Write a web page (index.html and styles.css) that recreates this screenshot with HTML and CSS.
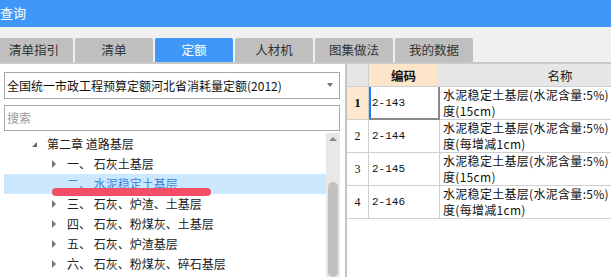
FILE: index.html
```html
<!DOCTYPE html>
<html lang="zh">
<head>
<meta charset="utf-8">
<title>查询</title>
<link rel="stylesheet" href="styles.css">
</head>
<body>
<div class="title">查询</div>
<div class="tabs">
  <div class="tab">清单指引</div>
  <div class="tab">清单</div>
  <div class="tab active">定额</div>
  <div class="tab">人材机</div>
  <div class="tab">图集做法</div>
  <div class="tab">我的数据</div>
</div>
<div class="main">
  <div class="left">
    <div class="select"><span class="select-text">全国统一市政工程预算定额河北省消耗量定额(2012)</span><i class="caret"></i></div>
    <div class="search"><span class="placeholder">搜索</span></div>
    <div class="tree">
      <ul class="rows">
        <li class="row l1"><i class="exp open"></i><span>第二章 道路基层</span></li>
        <li class="row l2"><i class="exp"></i><span>一、 石灰土基层</span></li>
        <li class="row l2 selected"><i class="exp none"></i><span>二、 水泥稳定土基层</span></li>
        <li class="row l2"><i class="exp"></i><span>三、 石灰、炉渣、土基层</span></li>
        <li class="row l2"><i class="exp"></i><span>四、 石灰、粉煤灰、土基层</span></li>
        <li class="row l2"><i class="exp"></i><span>五、 石灰、炉渣基层</span></li>
        <li class="row l2"><i class="exp"></i><span>六、 石灰、粉煤灰、碎石基层</span></li>
      </ul>
      <div class="scrollbar"><i class="up"></i><span class="thumb"></span></div>
    </div>
  </div>
  <div class="right">
    <div class="grid">
      <div class="hd corner"></div>
      <div class="hd code-hd">编码</div>
      <div class="hd name-hd">名称</div>

      <div class="rn cur">1</div>
      <div class="code cur-cell">2-143</div>
      <div class="name"><span class="line">水泥稳定土基层(水泥含量:5%) 厚</span><span class="line">度(15cm)</span></div>

      <div class="rn">2</div>
      <div class="code">2-144</div>
      <div class="name"><span class="line">水泥稳定土基层(水泥含量:5%) 厚</span><span class="line">度(每增减1cm)</span></div>

      <div class="rn">3</div>
      <div class="code">2-145</div>
      <div class="name"><span class="line">水泥稳定土基层(水泥含量:5%) 厚</span><span class="line">度(15cm)</span></div>

      <div class="rn">4</div>
      <div class="code">2-146</div>
      <div class="name"><span class="line">水泥稳定土基层(水泥含量:5%) 厚</span><span class="line">度(每增减1cm)</span></div>
    </div>
  </div>
</div>
<div class="mark"></div>
</body>
</html>
```

FILE: styles.css
```css
* { box-sizing: border-box; }
html, body {
  margin: 0;
  padding: 0;
}
body {
  width: 611px;
  height: 277px;
  overflow: hidden;
  position: relative;
  background: #f0f0f0;
  font-family: "Noto Sans CJK SC", "Noto Sans", sans-serif;
  font-size: 12px;
  color: #222;
}

.title {
  height: 27px;
  line-height: 26px;
  background: #3f98f7;
  color: #fff;
  font-size: 13px;
  padding-left: 0;
}

.tabs {
  height: 37px;
  padding-top: 11px;
  display: flex;
  gap: 2px;
  margin-left: -5px;
  border-bottom: 2px solid #c9c9c9;
  background: #f0f0f0;
}
.tab {
  width: 78px;
  height: 24px;
  line-height: 24px;
  text-align: center;
  background: #bfbfbf;
  color: #333;
  font-size: 12.5px;
  border-radius: 2px 2px 0 0;
}
.tab.active {
  background: #3f98f7;
  color: #fff;
}

.main {
  display: flex;
  height: 213px;
  overflow: hidden;
}

.left {
  width: 347px;
  flex: none;
  background: #fff;
  border-right: 2px solid #c4c4c4;
  padding: 8px 5px 0 4px;
  display: flex;
  flex-direction: column;
}

.select {
  height: 27px;
  border: 1px solid #a9a9a9;
  display: flex;
  align-items: center;
  padding: 0 6px 0 2px;
  color: #111;
}
.select-text {
  flex: 1;
  line-height: 25px;
}
.caret {
  width: 0;
  height: 0;
  border-left: 3.5px solid transparent;
  border-right: 3.5px solid transparent;
  border-top: 4px solid #777;
  margin-bottom: 2px;
}

.search {
  margin-top: 6px;
  height: 26px;
  border: 1px solid #a9a9a9;
  padding-left: 2px;
  line-height: 24px;
}
.placeholder { color: #9a9a9a; }

.tree {
  flex: 1;
  display: flex;
  margin-top: 2px;
  min-height: 0;
}
.rows {
  list-style: none;
  margin: 0;
  padding: 1px 0 0 0;
  flex: 1;
}
.row {
  height: 20px;
  line-height: 20px;
  display: flex;
  align-items: center;
  color: #222;
  white-space: pre;
}
.row.l1 { padding-left: 28px; }
.row.l2 { padding-left: 48px; }
.exp {
  width: 15px;
  height: 20px;
  flex: none;
  position: relative;
}
.exp::before {
  content: "";
  position: absolute;
  left: 0;
  top: 6px;
  border-left: 4px solid #777;
  border-top: 4px solid transparent;
  border-bottom: 4px solid transparent;
}
.exp.open::before {
  top: 8px;
  border-left: 5px solid transparent;
  border-top: 0;
  border-bottom: 5px solid #666;
}
.exp.none::before { display: none; }
.row.selected {
  background: #cce8ff;
  color: #3a86e0;
}

.scrollbar {
  width: 14px;
  flex: none;
  background: #e8e8e8;
  position: relative;
  display: flex;
  flex-direction: column;
  align-items: center;
}
.up {
  margin-top: 4px;
  width: 0;
  height: 0;
  border-left: 4px solid transparent;
  border-right: 4px solid transparent;
  border-bottom: 4px solid #8a8a8a;
}
.thumb {
  margin-top: 41px;
  width: 10px;
  height: 120px;
  background: #c1c1c1;
  border-radius: 5px;
}

.right {
  flex: 1;
  background: #fff;
  overflow: hidden;
  min-width: 0;
}
.grid {
  display: grid;
  grid-template-columns: 22px 71px 241px;
  grid-template-rows: 23px repeat(4, 33px);
  width: 334px;
  font-family: "Noto Sans CJK SC", sans-serif;
  font-size: 12px;
  color: #111;
}
.hd {
  border-right: 1px solid #cfcfcf;
  border-bottom: 1px solid #cfcfcf;
  background: #e6e6e6;
  display: flex;
  align-items: center;
  justify-content: center;
  font-size: 12.5px;
}
.code-hd {
  background: #fde5c9;
  font-weight: bold;
  border-right: 2px solid #e6e6e6;
}
.name-hd { color: #222; }

.rn {
  border-right: 1px solid #cfcfcf;
  border-bottom: 1px solid #cfcfcf;
  display: flex;
  align-items: center;
  justify-content: center;
  font-family: "Liberation Serif", serif;
  font-size: 12px;
}
.rn.cur {
  background: #fde7ce;
  font-weight: bold;
  font-size: 13px;
}
.code {
  border-right: 1px solid #cfcfcf;
  border-bottom: 1px solid #cfcfcf;
  display: flex;
  align-items: center;
  padding-left: 3px;
  font-family: "Liberation Mono", monospace;
  font-size: 11px;
}
.code.cur-cell {
  border-left: 2px solid #1f7cf0;
  border-right: 2px solid #8a8a8a;
  border-bottom: 2px solid #8a8a8a;
  padding-left: 1px;
}
.name {
  border-bottom: 1px solid #cfcfcf;
  display: flex;
  flex-direction: column;
  padding: 0 0 0 3px;
  line-height: 16px;
  white-space: nowrap;
  letter-spacing: 0.3px;
}
.line { display: block; height: 16px; }

.mark {
  position: absolute;
  left: 52px;
  top: 188px;
  width: 159px;
  height: 8px;
  border-radius: 4px;
  background: #f24f67;
}
```
